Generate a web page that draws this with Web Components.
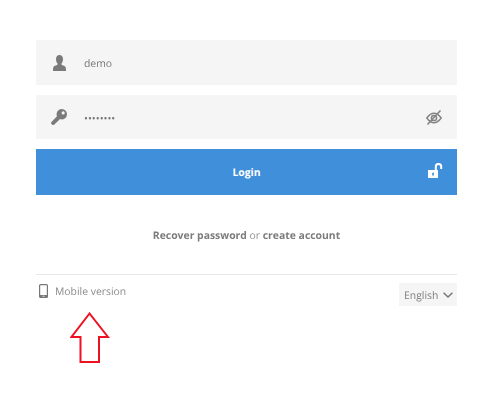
<!DOCTYPE html>
<html>
<head>
<meta charset="utf-8">
<style>
  html, body { margin: 0; height: 100%; background: #fff; overflow: hidden; }
  body { font-family: "Open Sans", sans-serif; }
</style>
</head>
<body>
<login-page></login-page>

<script>
// Icons used by the form: [viewBox width, viewBox height, markup], 1 unit = 1px
const ICONS = {
  user: [13, 16, '<path fill="currentColor" d="M6.500 0C8.800 0 10 1.700 10 4.200c0 1.800-.7 3.300-1.500 4.200v1.200c0 .7 3.300 1.200 4 2.400.4.700.5 2.200.5 4H0c0-1.800.1-3.300.5-4 .7-1.200 4-1.700 4-2.400V8.400C3.700 7.500 3 6 3 4.200 3 1.700 4.200 0 6.500 0z"/>'],
  key: [16, 16, '<path fill="currentColor" fill-rule="evenodd" d="M10.800 0A5.200 5.200 0 0 1 16 5.200a5.200 5.200 0 0 1-6.900 4.900l-5.700 5.500c-.6.500-1.300.5-2.100.2L.4 15c-.5-.8-.4-1.500.1-2.100L6 7.200A5.200 5.200 0 0 1 10.800 0zm1.400 2.300a1.600 1.600 0 1 0 0 3.200 1.600 1.600 0 0 0 0-3.200z"/>'],
  eyeOff: [16, 15, '<g fill="none" stroke="currentColor"><path stroke-width="1.500" d="M.8 8C3.300 4.700 5.600 3.300 8 3.300s4.700 1.400 7.200 4.700c-2.500 3.300-4.800 4.700-7.200 4.700S3.300 11.300.8 8z"/><circle stroke-width="1.500" cx="8" cy="8" r="2.600"/><path stroke-width="1.600" d="M1.500 14.500 14.500.5"/></g>'],
  unlock: [15, 15, '<path fill="currentColor" d="M0 7h10v8H0z"/><path fill="none" stroke="currentColor" stroke-width="2" d="M7.800 7V3.600a2.700 2.700 0 0 1 5.400 0V6"/><path fill="#3f8fdb" d="M4.200 9.800h1.700v2.800H4.200z"/>'],
  phone: [9, 14, '<rect x=".6" y=".6" width="7.800" height="12.800" rx="1" fill="none" stroke="currentColor" stroke-width="1.200"/><path fill="currentColor" d="M.6 11h7.800v2.400H.6z"/><path fill="#fff" d="M3.500 11.800h2v.8h-2z"/>'],
  chevron: [10, 6, '<path fill="none" stroke="currentColor" stroke-width="1.500" d="M.6.700 5 5 9.400.7"/>']
};

class UiIcon extends HTMLElement {
  connectedCallback() {
    const [w, h, markup] = ICONS[this.getAttribute('name')];
    this.attachShadow({ mode: 'open' }).innerHTML = `
      <style>
        :host { display: inline-flex; flex: none; }
        svg { display: block; }
      </style>
      <svg width="${w}" height="${h}" viewBox="0 0 ${w} ${h}">${markup}</svg>
    `;
  }
}

class LoginField extends HTMLElement {
  connectedCallback() {
    const trailing = this.getAttribute('trailing');
    this.attachShadow({ mode: 'open' }).innerHTML = `
      <style>
        :host {
          display: flex;
          align-items: center;
          height: var(--field-height, 45px);
          background: #f5f5f5;
          color: #777;
          font-size: 10.400px;
        }
        .lead { width: 46px; margin-right: 2px; display: flex; justify-content: center; color: #7a7a7a; }
        .value { flex: 1; padding-top: 3px; letter-spacing: var(--value-spacing, 0); }
        .trail { margin-right: 15px; color: #858585; display: flex; }
      </style>
      <span class="lead"><ui-icon name="${this.getAttribute('icon')}"></ui-icon></span>
      <span class="value"><slot></slot></span>
      ${trailing ? `<span class="trail"><ui-icon name="${trailing}"></ui-icon></span>` : ''}
    `;
  }
}

class LoginButton extends HTMLElement {
  connectedCallback() {
    this.attachShadow({ mode: 'open' }).innerHTML = `
      <style>
        :host {
          display: block;
          position: relative;
          height: 46px;
          line-height: 49px;
          background: #3f8fdb;
          color: #fff;
          font-size: 10.400px;
          font-weight: 700;
          text-align: center;
        }
        ui-icon { position: absolute; right: 14px; top: 14px; }
      </style>
      <slot></slot>
      <ui-icon name="unlock"></ui-icon>
    `;
  }
}

class LangSelect extends HTMLElement {
  connectedCallback() {
    this.attachShadow({ mode: 'open' }).innerHTML = `
      <style>
        :host {
          display: flex;
          align-items: center;
          gap: 5px;
          width: 58px;
          height: 23px;
          box-sizing: border-box;
          padding-left: 5px;
          background: #f5f5f5;
          color: #7f7f7f;
          font-size: 10.400px;
        }
        span { padding-top: 2px; }
        ui-icon { color: #777; }
      </style>
      <span><slot></slot></span>
      <ui-icon name="chevron"></ui-icon>
    `;
  }
}

class LoginPage extends HTMLElement {
  connectedCallback() {
    this.attachShadow({ mode: 'open' }).innerHTML = `
      <style>
        :host {
          display: block;
          position: relative;
          height: 400px;
          box-sizing: border-box;
          padding: 40px 43px 0 36px;
          font-family: "Open Sans", sans-serif;
          text-rendering: geometricPrecision;
          will-change: opacity;   /* own layer: grey text antialiasing, no colour fringes */
        }
        .form { display: grid; gap: 10px; }
        .links {
          margin-top: 32px;
          text-align: center;
          font-size: 10.400px;
          line-height: 18px;
          color: #909090;
        }
        .links b { color: #7c7c7c; font-weight: 700; }
        .foot {
          margin-top: 29px;
          border-top: 1px solid #e8e8e8;
          padding-top: 8px;
          display: flex;
          justify-content: space-between;
          align-items: flex-start;
        }
        .mobile {
          display: flex;
          align-items: center;
          gap: 7px;
          height: 15px;
          padding-left: 3px;
          color: #8a8a8a;
          font-size: 10.400px;
        }
        .mobile span { padding-top: 2px; }
        .mobile ui-icon { color: #777; }
        .arrow { position: absolute; left: 70px; top: 312px; }
      </style>
      <div class="form">
        <login-field icon="user">demo</login-field>
        <login-field icon="key" trailing="eyeOff" style="--field-height:44px">••••••••</login-field>
        <login-button>Login</login-button>
      </div>
      <div class="links"><b>Recover password</b> or <b>create account</b></div>
      <div class="foot">
        <span class="mobile"><ui-icon name="phone"></ui-icon><span>Mobile version</span></span>
        <lang-select>English</lang-select>
      </div>
      <svg class="arrow" width="40" height="52" viewBox="0 0 40 52">
        <path fill="#fff" stroke="#ee1122" stroke-width="2" d="M19.500 1.500 1.500 25H10.500V50H29V25H38z"/>
      </svg>
    `;
  }
}

customElements.define('ui-icon', UiIcon);
customElements.define('login-field', LoginField);
customElements.define('login-button', LoginButton);
customElements.define('lang-select', LangSelect);
customElements.define('login-page', LoginPage);
</script>
</body>
</html>
